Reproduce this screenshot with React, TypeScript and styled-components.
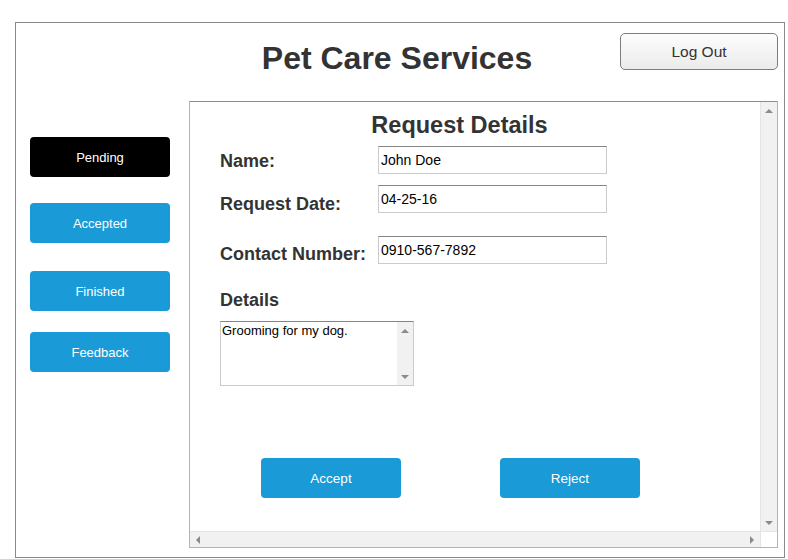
import styled, { createGlobalStyle } from 'styled-components';

const GlobalStyle = createGlobalStyle`
  * {
    box-sizing: border-box;
  }

  body {
    margin: 0;
    background: #fff;
    font-family: 'Liberation Sans', Arial, sans-serif;
  }
`;

const BLUE = '#1a9ad6';
const INK = '#333';

const Frame = styled.div`
  width: 770px;
  height: 536px;
  margin: 22px 0 0 15px;
  border: 1px solid #8a8a8a;

  display: grid;
  grid-template-rows: 78px 1fr;
`;

const Header = styled.header`
  display: grid;
  grid-template-columns: 1fr auto 1fr;
  align-items: start;
  padding: 10px 6px 0 0;
`;

const Title = styled.h1`
  grid-column: 2;
  margin: 3px 0 0;
  font-size: 32px;
  line-height: 44px;
  font-weight: bold;
  color: ${INK};
  white-space: nowrap;
`;

const LogOutButton = styled.button`
  grid-column: 3;
  justify-self: end;
  width: 158px;
  height: 37px;
  border: 1px solid #7d7d7d;
  border-radius: 5px;
  background: linear-gradient(#fdfdfd, #ebebeb);
  font-family: inherit;
  font-size: 15.5px;
  color: ${INK};
  padding: 0;
`;

const Body = styled.div`
  display: flex;
  align-items: flex-start;
`;

const Sidebar = styled.nav`
  width: 173px;
  padding: 36px 0 0 14px;
  display: flex;
  flex-direction: column;
`;

const SideButton = styled.button<{ $active?: boolean; $offset: number }>`
  width: 140px;
  height: 40px;
  margin-top: ${(p) => p.$offset}px;
  border: none;
  border-radius: 4px;
  background: ${(p) => (p.$active ? '#000' : BLUE)};
  color: #fff;
  font-family: inherit;
  font-size: 13px;
  padding: 0;
`;

const Panel = styled.section`
  width: 589px;
  height: 447px;
  border: 1px solid #b4b4b4;
  border-top-color: #8c8c8c;

  display: grid;
  grid-template-columns: 1fr 17px;
  grid-template-rows: 1fr 16px;
`;

const Content = styled.div`
  padding: 9px 0 0 30px;
  overflow: hidden;
`;

const VScroll = styled.div`
  background: #f1f1f1;
  border-left: 1px solid #e4e4e4;
  display: flex;
  flex-direction: column;
  align-items: center;
  justify-content: space-between;
  padding: 7px 0 6px;
`;

const HScroll = styled.div`
  background: #f1f1f1;
  border-top: 1px solid #e4e4e4;
  display: flex;
  align-items: center;
  justify-content: space-between;
  padding: 0 6px 0 6px;
`;

const Corner = styled.div`
  background: #fff;
  border-top: 1px solid #e4e4e4;
  border-left: 1px solid #e4e4e4;
`;

type Dir = 'up' | 'down' | 'left' | 'right';

const Arrow = styled.span<{ $dir: Dir }>`
  width: 0;
  height: 0;
  border-style: solid;
  border-color: transparent;
  ${(p) =>
    p.$dir === 'up'
      ? `border-width: 0 4px 4px 4px; border-bottom-color: #8a8a8a;`
      : p.$dir === 'down'
        ? `border-width: 4px 4px 0 4px; border-top-color: #8a8a8a;`
        : p.$dir === 'left'
          ? `border-width: 4px 4px 4px 0; border-right-color: #8a8a8a;`
          : `border-width: 4px 0 4px 4px; border-left-color: #8a8a8a;`}
`;

const Heading = styled.h2`
  width: 479px;
  margin: 0;
  font-size: 23.5px;
  line-height: 28px;
  font-weight: bold;
  text-align: center;
  color: ${INK};
`;

const FieldRow = styled.div<{ $gap: number }>`
  display: flex;
  align-items: flex-start;
  height: 28px;
  margin-top: ${(p) => p.$gap}px;
`;

const FieldLabel = styled.label<{ $drop: number }>`
  width: 158px;
  margin-top: ${(p) => p.$drop}px;
  font-size: 18px;
  line-height: 28px;
  font-weight: bold;
  color: ${INK};
  white-space: nowrap;
`;

const TextField = styled.input`
  width: 229px;
  height: 28px;
  margin: 0;
  padding: 0 2px;
  border: 1px solid #cbcbcb;
  border-top-color: #858585;
  font-family: inherit;
  font-size: 14px;
  color: #000;
  outline: none;
`;

const SectionLabel = styled.div`
  margin-top: 25px;
  font-size: 18px;
  line-height: 22px;
  font-weight: bold;
  color: ${INK};
`;

const TextBox = styled.div`
  width: 194px;
  height: 65px;
  margin-top: 10px;
  border: 1px solid #cbcbcb;
  border-top-color: #858585;
  display: flex;
`;

const TextBoxValue = styled.div`
  flex: 1;
  padding: 1px 1px;
  font-size: 13px;
  line-height: 15px;
  color: #000;
`;

const TextBoxScroll = styled.div`
  width: 16px;
  background: #f1f1f1;
  display: flex;
  flex-direction: column;
  align-items: center;
  justify-content: space-between;
  padding: 7px 0 6px;
`;

const Actions = styled.div`
  display: flex;
  gap: 99px;
  margin-top: 72px;
  padding-left: 41px;
`;

const ActionButton = styled.button`
  width: 140px;
  height: 40px;
  border: none;
  border-radius: 4px;
  background: ${BLUE};
  color: #fff;
  font-family: inherit;
  font-size: 13.5px;
  padding: 0;
`;

const sideItems = [
  { label: 'Pending', offset: 0, active: true },
  { label: 'Accepted', offset: 26 },
  { label: 'Finished', offset: 28 },
  { label: 'Feedback', offset: 21 },
];

const fields = [
  { label: 'Name:', value: 'John Doe', gap: 7, drop: 1 },
  { label: 'Request Date:', value: '04-25-16', gap: 11, drop: 5 },
  { label: 'Contact Number:', value: '0910-567-7892', gap: 23, drop: 4 },
];

export default function App() {
  return (
    <>
      <GlobalStyle />
      <Frame>
        <Header>
          <Title>Pet Care Services</Title>
          <LogOutButton>Log Out</LogOutButton>
        </Header>
        <Body>
          <Sidebar>
            {sideItems.map((item) => (
              <SideButton key={item.label} $active={item.active} $offset={item.offset}>
                {item.label}
              </SideButton>
            ))}
          </Sidebar>
          <Panel>
            <Content>
              <Heading>Request Details</Heading>
              {fields.map((f) => (
                <FieldRow key={f.label} $gap={f.gap}>
                  <FieldLabel $drop={f.drop}>{f.label}</FieldLabel>
                  <TextField readOnly value={f.value} />
                </FieldRow>
              ))}
              <SectionLabel>Details</SectionLabel>
              <TextBox>
                <TextBoxValue>Grooming for my dog.</TextBoxValue>
                <TextBoxScroll>
                  <Arrow $dir="up" />
                  <Arrow $dir="down" />
                </TextBoxScroll>
              </TextBox>
              <Actions>
                <ActionButton>Accept</ActionButton>
                <ActionButton>Reject</ActionButton>
              </Actions>
            </Content>
            <VScroll>
              <Arrow $dir="up" />
              <Arrow $dir="down" />
            </VScroll>
            <HScroll>
              <Arrow $dir="left" />
              <Arrow $dir="right" />
            </HScroll>
            <Corner />
          </Panel>
        </Body>
      </Frame>
    </>
  );
}
